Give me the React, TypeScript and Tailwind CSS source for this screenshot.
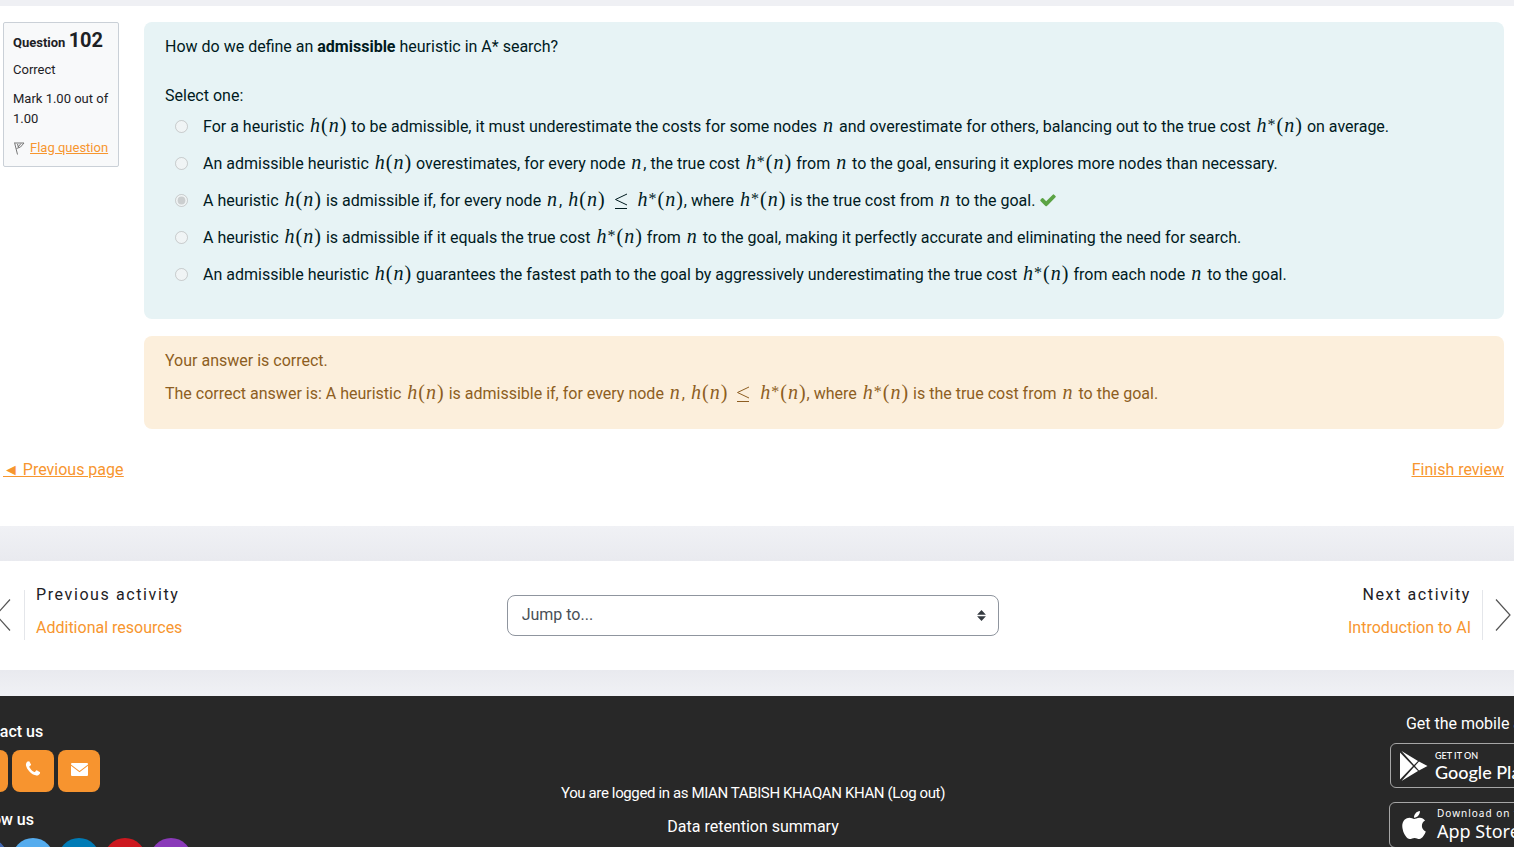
import type { ReactNode } from "react";
import { FaApple } from "react-icons/fa";

function V({ children }: { children: ReactNode }) {
  return <i className="px-px">{children}</i>;
}

function N() {
  return (
    <span className="mx-px font-['Liberation_Serif',serif] text-[20px] leading-none">
      <V>n</V>
    </span>
  );
}

function H({ star = false }: { star?: boolean }) {
  return (
    <span className="mx-px whitespace-nowrap font-['Liberation_Serif',serif] text-[20px] leading-none">
      <V>h</V>
      {star && <span className="pr-px align-[2px] text-[16px] leading-none">*</span>}(<V>n</V>)
    </span>
  );
}

function Leq() {
  return (
    <svg viewBox="0 0 14 18" className="mx-1 inline-block h-[18px] w-3.5 align-[-4px]" role="img" aria-label="less than or equal to">
      <path d="M13 2 1.500 7.500l11.500 5.500M1 16.500h12" fill="none" stroke="currentColor" strokeWidth="1" />
    </svg>
  );
}

function Check() {
  return (
    <svg viewBox="0 0 1792 1792" className="inline-block size-[18px] align-[-3px] text-[#5ba344]" role="img" aria-label="Correct">
      <path
        fill="currentColor"
        d="M1671 566q0 40-28 68l-724 724-136 136q-28 28-68 28t-68-28l-136-136-362-362q-28-28-28-68t28-68l136-136q28-28 68-28t68 28l294 295 656-657q28-28 68-28t68 28l136 136q28 28 28 68z"
      />
    </svg>
  );
}

const options: ReactNode[] = [
  <>For a heuristic <H /> to be admissible, it must underestimate the costs for some nodes <N /> and overestimate for others, balancing out to the true cost <H star /> on average.</>,
  <>An admissible heuristic <H /> overestimates, for every node <N />, the true cost <H star /> from <N /> to the goal, ensuring it explores more nodes than necessary.</>,
  <>A heuristic <H /> is admissible if, for every node <N />, <H /> <Leq /> <H star />, where <H star /> is the true cost from <N /> to the goal. <Check /></>,
  <>A heuristic <H /> is admissible if it equals the true cost <H star /> from <N /> to the goal, making it perfectly accurate and eliminating the need for search.</>,
  <>An admissible heuristic <H /> guarantees the fastest path to the goal by aggressively underestimating the true cost <H star /> from each node <N /> to the goal.</>,
];

function QuestionInfo() {
  return (
    <aside className="w-29 shrink-0 rounded-xs border border-[#cad0d7] bg-[#f8f9fa] pt-1 pr-1.5 pb-2 pl-[9px] text-[13px] leading-5 text-[#1d2125]">
      <h3 className="font-bold leading-[26px]">
        Question <span className="text-[20px]">102</span>
      </h3>
      <p className="mt-1">Correct</p>
      <p className="mt-[9px]">Mark 1.00 out of 1.00</p>
      <a href="#flag" className="mt-[9px] flex items-center whitespace-nowrap text-[#f7962f] underline">
        <svg viewBox="0 0 14 14" className="mr-[3px] size-3.5 shrink-0 text-[#777]" aria-hidden="true">
          <path d="M1.500 1.500 4.500 13.500M2 2h9L7.500 6 3.500 7.500M4.500 3l1 3.500M8 2.500 5 6" fill="none" stroke="currentColor" strokeWidth="1" />
        </svg>
        Flag question
      </a>
    </aside>
  );
}

function Chevron({ left = false }: { left?: boolean }) {
  return (
    <svg viewBox="0 0 16 32" className="h-8 w-4 text-[#555]" aria-hidden="true">
      <path d={left ? "M15 0.5 1 16l14 15.5" : "M1 0.5 15 16 1 31.5"} fill="none" stroke="currentColor" strokeWidth="1.2" />
    </svg>
  );
}

function ActivityNav() {
  return (
    <nav className="-ml-[5px] mr-[3px] flex items-center justify-between pt-[29px] pb-[30px]">
      <a href="#previous" className="flex flex-1 items-center">
        <Chevron left />
        <span className="ml-[13px] flex h-[50px] flex-col justify-center border-l border-[#e4e6ea] pb-2 pl-[11px]">
          <span className="leading-[33px] tracking-widest text-[#1d2125]">Previous activity</span>
          <span className="leading-[33px] text-[#f7962f]">Additional resources</span>
        </span>
      </a>
      <div className="relative w-[32.5%]">
        <label htmlFor="jump" className="sr-only">Jump to activity</label>
        <select id="jump" className="h-[41px] w-full appearance-none rounded-lg border border-[#8f959e] bg-white pr-8 pl-3.5 text-[16px] text-[#495057]">
          <option>Jump to...</option>
        </select>
        <svg viewBox="0 0 8 10" className="pointer-events-none absolute top-[15px] right-[13px] h-[11px] w-[9px] text-[#343a40]" aria-hidden="true">
          <path fill="currentColor" d="M4 0 0 4.300h8zm0 10L0 5.700h8z" />
        </svg>
      </div>
      <a href="#next" className="flex flex-1 items-center justify-end text-right">
        <span className="mr-3 flex h-[50px] flex-col justify-center border-r border-[#e4e6ea] pr-[11px] pb-2">
          <span className="leading-[33px] tracking-widest text-[#1d2125]">Next activity</span>
          <span className="leading-[33px] text-[#f7962f]">Introduction to AI</span>
        </span>
        <Chevron />
      </a>
    </nav>
  );
}

const contactIcons = [
  { name: "Location", box: "0 0 16 16", path: "M8 0a5 5 0 0 0-5 5c0 4 5 11 5 11s5-7 5-11a5 5 0 0 0-5-5z" },
  {
    name: "Phone",
    box: "0 0 1792 1792",
    path: "M1600 1240q0 27-10 70.5t-21 68.5q-21 50-122 106-94 51-186 51-27 0-53-3.5t-57.5-12.5-47-14.5-55.5-20.5-49-18q-98-35-175-83-127-79-264-216t-216-264q-48-77-83-175-3-9-18-49t-20.5-55.5-14.5-47-12.5-57.5-3.5-53q0-92 51-186 56-101 106-122 25-11 68.5-21t70.5-10q14 0 21 3 18 6 53 76 11 19 30 54t35 63.5 31 53.5q3 4 17.5 25t21.5 35.5 7 28.5q0 20-28.5 50t-62 55-62 53-28.5 46q0 9 5 22.5t8.5 20.5 14 24 11.5 19q76 137 174 235t235 174q2 1 19 11.5t24 14 20.5 8.5 22.5 5q18 0 46-28.5t53-62 55-62 50-28.5q14 0 28.5 7t35.5 21.5 25 17.5q25 15 53.5 31t63.5 35 54 30q70 35 76 53 3 7 3 21z",
  },
  { name: "Email", box: "0 0 18 18", path: "M2 3h15q1 0 1 1v.500L9.500 11 1 4.500V4q0-1 1-1zM1 5.800l8.500 6.400L18 5.800V15q0 1-1 1H2q-1 0-1-1z" },
];

const socials = [
  { name: "Facebook", color: "bg-[#4267b2]" },
  { name: "Twitter", color: "bg-[#55acee]" },
  { name: "LinkedIn", color: "bg-[#007bb6]" },
  { name: "YouTube", color: "bg-[#cd181f]" },
  { name: "Instagram", color: "bg-[#8a3ab9]" },
];

function Footer() {
  return (
    <footer className="grow bg-[#282828] text-white">
      <div className="-mr-[26px] -ml-[34px] flex justify-between">
        <div className="flex-1 pt-6">
          <h4 className="font-medium leading-6">Contact us</h4>
          <div className="mt-1.5 flex gap-1">
            {contactIcons.map((icon) => (
              <a key={icon.name} href="#contact" aria-label={icon.name} className="flex size-[42px] items-center justify-center rounded-lg bg-[#f7942f] pb-1">
                <svg viewBox={icon.box} className="size-[18px]" aria-hidden="true">
                  <path fill="currentColor" d={icon.path} />
                </svg>
              </a>
            ))}
          </div>
          <h4 className="mt-4 font-medium leading-6">Follow us</h4>
          <div className="mt-1.5 flex gap-1">
            {socials.map((s) => (
              <a key={s.name} href="#social" aria-label={s.name} className={`size-[42px] rounded-full ${s.color}`} />
            ))}
          </div>
        </div>
        <div className="pt-[81px] text-center leading-[33px]">
          <p className="text-[15px] tracking-tight">
            You are logged in as <a href="#profile">MIAN TABISH KHAQAN KHAN</a> (<a href="#logout">Log out</a>)
          </p>
          <a href="#retention">Data retention summary</a>
        </div>
        <div className="flex flex-1 flex-col items-end pt-4">
          <a href="#app" className="whitespace-nowrap leading-6">Get the mobile app</a>
          <a href="#play" className="mt-[7px] flex h-[45px] w-[150px] items-center rounded-md border border-[#a6a6a6] pl-2 font-[Lato,sans-serif]">
            <svg viewBox="0 0 30 32" className="h-8 w-[30px]" aria-hidden="true">
              <path fill="#fff" d="M1 2.500v27L14 16zM2.500 1 15 15l4-4zM2.500 31 15 17l4 4zM20 11.500l8.500 4.500L20 20.500 16 16z" />
            </svg>
            <span className="ml-1.5 flex flex-col whitespace-nowrap">
              <span className="text-[9px] font-medium leading-3">GET IT ON</span>
              <span className="text-[18px] font-medium leading-5">Google Play</span>
            </span>
          </a>
          <a href="#store" className="mt-3.5 flex h-[46px] w-[151px] items-center rounded-md border border-[#a6a6a6] pl-3 font-['Noto_Sans',sans-serif]">
            <FaApple className="-ml-1 size-8" aria-hidden="true" />
            <span className="ml-[7px] flex flex-col whitespace-nowrap">
              <span className="text-[10px] leading-3 tracking-widest">Download on the</span>
              <span className="text-[18px] leading-6">App Store</span>
            </span>
          </a>
        </div>
      </div>
    </footer>
  );
}

export default function App() {
  return (
    <div className="flex h-screen flex-col overflow-hidden bg-[#eff0f4] pt-1.5 font-[Roboto,sans-serif] text-[16px] text-[#1d2125]">
      <main className="bg-white pt-4 pr-2.5 pb-11 pl-[3px]">
        <div className="flex items-start gap-[25px]">
          <QuestionInfo />
          <div className="min-w-0 flex-1">
            <fieldset className="rounded-lg bg-[#e7f3f5] px-[21px] pt-[13px] pb-[26px] text-[#001a1e]">
              <p className="leading-6">
                How do we define an <b>admissible</b> heuristic in A* search?
              </p>
              <p className="mt-[25px] leading-6">Select one:</p>
              {options.map((option, i) => (
                <div key={i} className="flex h-[37px] items-center pl-2.5">
                  <input type="radio" id={`answer${i}`} name="answer" disabled defaultChecked={i === 2} className="mr-[15px] size-[13px]" />
                  <label htmlFor={`answer${i}`} className="leading-[37px]">{option}</label>
                </div>
              ))}
            </fieldset>
            <section className="mt-[17px] rounded-lg bg-[#fcefdc] px-[21px] pt-[13px] pb-[17px] text-[#8d5e22]">
              <p className="leading-6">Your answer is correct.</p>
              <p className="mt-0.5 leading-[37px]">
                The correct answer is: A heuristic <H /> is admissible if, for every node <N />, <H /> <Leq /> <H star />, where <H star /> is the true cost from <N /> to the goal.
              </p>
            </section>
          </div>
        </div>
        <div className="mt-[29px] flex justify-between leading-6 text-[#f7962f] underline">
          <a href="#prev">◄ Previous page</a>
          <a href="#finish">Finish review</a>
        </div>
      </main>
      <div className="h-[35px] shrink-0 bg-linear-to-b from-[#f0f1f5] to-[#e9eaef]" />
      <section className="bg-white">
        <ActivityNav />
      </section>
      <div className="h-[26px] shrink-0 bg-linear-to-b from-[#e9eaef] to-[#f0f1f5]" />
      <Footer />
    </div>
  );
}
